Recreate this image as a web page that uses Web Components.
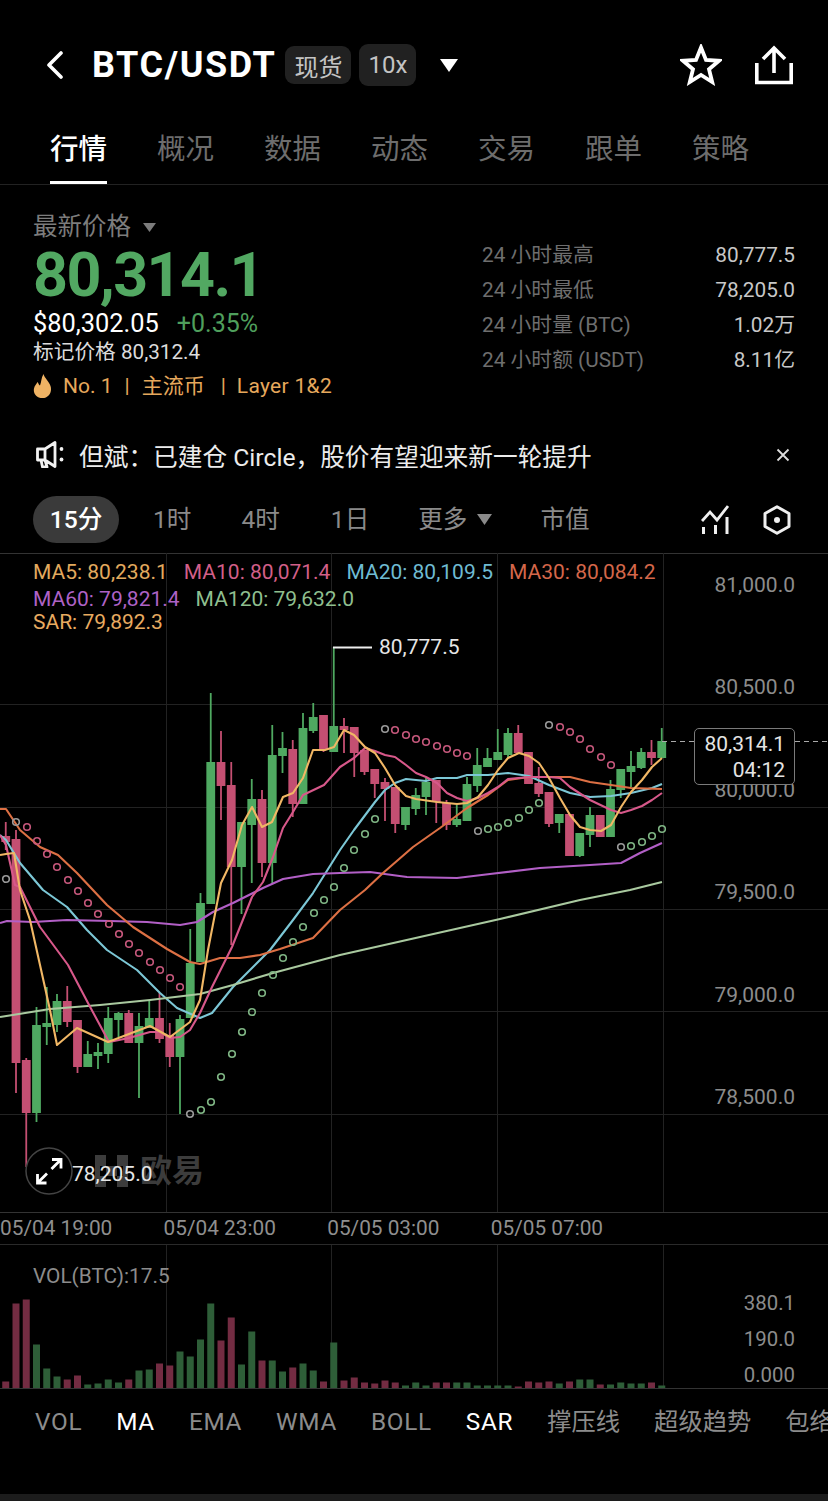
<!DOCTYPE html>
<html lang="zh-CN">
<head>
<meta charset="utf-8">
<title>BTC/USDT</title>
<style>
  html, body { margin: 0; background: #000; height: 1501px; overflow: hidden; }
  body { font-family: Roboto, "Noto Sans CJK SC", sans-serif; color: #fff; }
</style>
</head>
<body>
<pair-header></pair-header>
<market-tabs></market-tabs>
<price-panel></price-panel>
<notice-bar>但斌：已建仓 Circle，股价有望迎来新一轮提升</notice-bar>
<time-bar></time-bar>
<kline-chart></kline-chart>
<time-axis></time-axis>
<volume-chart></volume-chart>
<indicator-bar></indicator-bar>

<script>
const GREEN = '#4fa961';
const RED = '#c44f72';
const GRID = '#222';
const slotX = (i) => 5.75 + 10.25 * i;

// [bodyTop, bodyBottom, wickTop, wickBottom, g|r], index is the slot on the x axis
const CANDLES = [
  [836,842,822,850,'r'],[839,1063,830,1093,'r'],[1060,1113,1058,1167,'r'],[1025,1113,1007,1122,'g'],
  [1023,1027,987,1045,'g'],[1001,1025,994,1032,'g'],[1001,1022,986,1027,'r'],[1020,1067,1020,1073,'r'],
  [1054,1067,1041,1067,'g'],[1052,1056,1043,1069,'g'],[1018,1054,1007,1063,'g'],[1013,1020,1012,1037,'g'],
  [1013,1043,1010,1043,'r'],[1026,1043,1013,1098,'g'],[1018,1028,1000,1028,'g'],[1018,1039,993,1043,'r'],
  [1035,1057,1023,1067,'r'],[1019,1057,1015,1114,'g'],[963,1018,929,1018,'g'],[903,962,893,962,'g'],
  [762,904,693,904,'g'],[762,786,731,820,'r'],[785,867,762,945,'r'],[822,867,822,914,'g'],
  [799,825,779,883,'g'],[799,863,790,877,'r'],[755,863,725,883,'g'],[748,756,732,773,'g'],
  [749,804,740,817,'r'],[728,804,713,804,'g'],[717,731,703,733,'g'],[715,750,715,752,'r'],
  [726,752,647,752,'g'],[726,730,718,753,'r'],[727,753,727,777,'r'],[750,772,750,775,'r'],
  [769,784,769,798,'r'],[782,789,778,821,'r'],[787,824,787,833,'r'],[807,825,807,830,'g'],
  [795,809,788,815,'g'],[782,797,778,815,'g'],[780,802,780,823,'r'],[803,825,800,830,'r'],
  [819,825,805,827,'g'],[784,821,777,821,'g'],[765,786,748,792,'g'],[758,767,748,767,'g'],
  [752,760,729,760,'g'],[733,755,728,758,'g'],[733,753,725,753,'r'],[752,784,752,784,'r'],
  [783,794,767,797,'r'],[792,824,792,827,'r'],[814,823,814,833,'g'],[814,856,814,856,'r'],
  [833,856,833,857,'g'],[815,835,807,847,'g'],[815,837,815,837,'r'],[789,837,780,837,'g'],
  [769,790,769,798,'g'],[766,772,751,787,'g'],[752,768,748,769,'g'],[752,758,740,765,'r'],
  [741,758,728,758,'g']
];

const LINES = {
  '#7cc7d6': [[0,835],[6,840],[20,863],[43,890],[67,907],[87,930],[107,950],[137,970],[160,993],[177,1008],[200,1018],[212,1013],[233,987],[253,967],[270,950],[293,920],[313,893],[340,850],[354,830],[375,802],[385,790],[395,783],[406,779],[426,781],[437,778],[457,778],[467,775],[488,775],[508,773],[529,776],[549,785],[570,793],[590,797],[611,796],[631,793],[652,788],[662,784]],
  '#a9c99f': [[0,1017],[50,1009],[100,1005],[150,1000],[200,994],[233,985],[273,973],[340,955],[500,919],[580,900],[630,890],[662,882]],
  '#b25fc6': [[0,923],[7,921],[33,922],[67,920],[110,921],[147,922],[180,925],[197,922],[213,912],[233,903],[263,888],[283,879],[313,874],[340,873],[370,872],[407,877],[457,878],[490,874],[540,868],[590,865],[621,863],[640,853],[662,843]],
  '#dd7044': [[0,809],[6,809],[20,830],[40,847],[58,855],[77,873],[107,905],[133,927],[167,949],[190,962],[200,964],[220,958],[240,958],[260,955],[280,949],[313,938],[340,910],[365,890],[383,873],[413,847],[440,828],[467,808],[488,795],[508,780],[529,777],[549,777],[570,777],[590,782],[611,785],[631,788],[662,789]],
  '#d7588a': [[0,835],[6,845],[15,885],[20,887],[40,927],[57,950],[68,965],[88,1003],[109,1042],[129,1038],[150,1032],[160,1032],[170,1038],[180,1037],[190,1030],[200,1013],[212,987],[232,947],[252,897],[263,882],[273,857],[283,828],[293,812],[303,795],[324,785],[340,767],[354,758],[365,748],[375,751],[385,755],[395,757],[406,765],[416,773],[426,777],[437,783],[447,793],[457,798],[467,801],[478,798],[488,793],[498,787],[508,779],[529,777],[549,777],[560,778],[570,787],[590,800],[611,810],[621,813],[631,810],[642,806],[652,800],[662,793]],
  '#f1b765': [[0,855],[6,854],[14,853],[20,890],[30,920],[50,1010],[57,1045],[77,1028],[108,1042],[150,1026],[170,1037],[190,1022],[200,1000],[208,950],[221,883],[232,860],[242,825],[252,807],[262,827],[272,822],[283,797],[293,793],[303,778],[313,750],[325,750],[334,747],[344,730],[354,735],[365,747],[375,753],[385,768],[395,785],[406,796],[416,799],[437,802],[457,804],[467,803],[478,797],[488,785],[498,770],[508,758],[519,753],[529,756],[539,763],[549,778],[560,798],[570,815],[580,827],[590,830],[601,831],[611,825],[621,807],[631,792],[642,780],[652,767],[662,758]]
};

// runs of SAR dots: colour, then [x, y], the first dot of a run is grey
const SAR = [
  ['#7fb584', [[6,879]]],
  ['#c6587c', [[16,822],[27,827],[37,841],[47,854],[57,867],[68,880],[78,891],[88,903],[98,914],[109,924],[119,934],[129,944],[139,953],[150,962],[160,970],[170,978],[180,987]]],
  ['#7fb584', [[190,1114],[201,1110],[211,1102],[221,1077],[232,1054],[242,1032],[252,1012],[262,993],[273,975],[283,958],[293,942],[303,927],[314,913],[324,900],[334,887],[344,868],[354,850],[365,834],[375,819]]],
  ['#c6587c', [[385,729],[395,730],[406,735],[416,739],[426,742],[437,746],[447,749],[457,753],[467,756]]],
  ['#7fb584', [[478,831],[488,829],[498,827],[508,823],[519,818],[529,810],[539,803]]],
  ['#c6587c', [[549,725],[560,727],[570,732],[580,739],[590,749],[601,757],[611,765]]],
  ['#7fb584', [[621,847],[631,846],[642,842],[652,836],[662,829]]]
];

// bar heights in px and their side
const VOLUME = [
  [7,'r'],[85,'r'],[89,'r'],[44,'g'],[20,'g'],[12,'g'],[9,'r'],[13,'r'],[4,'g'],[5,'g'],[9,'g'],[6,'g'],[9,'r'],
  [18,'g'],[19,'g'],[25,'r'],[23,'r'],[37,'g'],[32,'g'],[49,'g'],[85,'g'],[48,'r'],[71,'r'],[24,'g'],[57,'g'],
  [28,'r'],[28,'g'],[17,'g'],[21,'r'],[25,'g'],[18,'g'],[7,'r'],[46,'g'],[8,'r'],[11,'r'],[6,'r'],[5,'r'],[8,'r'],
  [6,'r'],[3,'g'],[6,'g'],[3,'g'],[6,'r'],[6,'r'],[6,'g'],[6,'g'],[3,'g'],[3,'g'],[3,'g'],[3,'g'],[2,'r'],[7,'r'],
  [6,'r'],[7,'r'],[5,'g'],[7,'r'],[9,'g'],[9,'g'],[4,'r'],[4,'g'],[6,'g'],[5,'g'],[5,'g'],[6,'r'],[3,'g']
];

class PairHeader extends HTMLElement {
  constructor() {
    super();
    this.attachShadow({ mode: 'open' });
  }

  connectedCallback() {
    this.shadowRoot.innerHTML = `
      <style>
        :host { display: flex; align-items: center; height: 118px; padding: 12px 35px 0 46px; box-sizing: border-box; }
        .back { width: 18px; height: 28px; margin-right: 28px; flex: none; }
        .pair { font-size: 36px; font-weight: 700; letter-spacing: 1.6px; margin-right: 9px; line-height: 44px; }
        .tag { background: #212121; border-radius: 9px; color: #c4c4c4; font-size: 24px; display: flex; align-items: center; justify-content: center; }
        .spot { width: 66px; height: 38px; margin-right: 8px; }
        .lev { width: 57px; height: 42px; }
        .tri { width: 18px; height: 13px; margin-left: 24px; }
        .spacer { flex: 1; }
        .star { width: 42px; height: 42px; margin-right: 33px; }
        .share { width: 38px; height: 40px; }
      </style>
      <svg class="back" viewBox="0 0 18 28"><path d="M15 2 L3 14 L15 26" fill="none" stroke="#fff" stroke-width="3.6" stroke-linecap="round" stroke-linejoin="round"/></svg>
      <div class="pair">BTC/USDT</div>
      <div class="tag spot">现货</div>
      <div class="tag lev">10x</div>
      <svg class="tri" viewBox="0 0 18 13"><path d="M0 0 H18 L9 13 Z" fill="#fff"/></svg>
      <div class="spacer"></div>
      <svg class="star" viewBox="0 0 42 42"><path d="M21 3.5 L26 16 L39 16.8 L29 25.3 L32.2 38 L21 31 L9.8 38 L13 25.3 L3 16.8 L16 16 Z" fill="none" stroke="#fff" stroke-width="3.8" stroke-linejoin="miter"/></svg>
      <svg class="share" viewBox="0 0 38 40"><path d="M1.8 18 V37.5 H36.2 V18 M19 28 V3 M8 14 L19 3 L30 14" fill="none" stroke="#fff" stroke-width="3.6"/></svg>
    `;
  }
}

class MarketTabs extends HTMLElement {
  constructor() {
    super();
    this.attachShadow({ mode: 'open' });
  }

  connectedCallback() {
    const tabs = ['行情', '概况', '数据', '动态', '交易', '跟单', '策略'];
    this.shadowRoot.innerHTML = `
      <style>
        :host { display: flex; gap: 50px; height: 67px; padding-left: 50px; box-sizing: border-box; border-bottom: 1px solid #222; font-size: 28.5px; color: #6d6d6d; }
        .tab { width: 57px; height: 66px; box-sizing: border-box; padding-top: 11px; line-height: 42px; white-space: nowrap; }
        .on { color: #fff; font-weight: 500; border-bottom: 3px solid #fff; }
      </style>
      ${tabs.map((t, i) => `<div class="tab ${i === 0 ? 'on' : ''}">${t}</div>`).join('')}
    `;
  }
}

class PricePanel extends HTMLElement {
  constructor() {
    super();
    this.attachShadow({ mode: 'open' });
  }

  connectedCallback() {
    const stats = [
      ['24 小时最高', '80,777.5'],
      ['24 小时最低', '78,205.0'],
      ['24 小时量 (BTC)', '1.02万'],
      ['24 小时额 (USDT)', '8.11亿']
    ];
    this.shadowRoot.innerHTML = `
      <style>
        :host { display: flex; justify-content: space-between; height: 252px; padding: 27px 33px 0 33px; box-sizing: border-box; }
        .label { display: flex; align-items: center; font-size: 24.5px; line-height: 30px; color: #7c7c7c; }
        .label svg { width: 13px; height: 9px; margin-left: 12px; }
        .last { font-size: 61px; font-weight: 700; line-height: 66px; color: #52a862; letter-spacing: -1.6px; }
        .row { display: flex; align-items: baseline; gap: 18px; line-height: 32px; margin-top: -1px; font-size: 25.4px; }
        .chg { color: #4f9f5c; font-size: 25px; }
        .mark { font-size: 20.7px; line-height: 26px; color: #dcdcdc; margin-top: -1px; }
        .hot { display: flex; align-items: center; font-size: 21px; line-height: 28px; color: #e6a85c; margin-top: 7px; }
        .hot svg { width: 19px; height: 24px; margin-right: 11px; }
        .sep { margin: 0 12px; }
        .stats { width: 313px; padding-top: 28px; display: grid; grid-template-columns: 1fr auto; grid-auto-rows: 35px; align-items: baseline; font-size: 20.8px; line-height: 30px; }
        .stats .k { color: #6e6e6e; }
        .stats .v { color: #c8c8c8; text-align: right; }
      </style>
      <div>
        <div class="label">最新价格<svg viewBox="0 0 13 9"><path d="M0 0 H13 L6.5 9 Z" fill="#7c7c7c"/></svg></div>
        <div class="last">80,314.1</div>
        <div class="row"><span>$80,302.05</span><span class="chg">+0.35%</span></div>
        <div class="mark">标记价格 80,312.4</div>
        <div class="hot">
          <svg viewBox="0 0 19 24"><path d="M10.5 0 C11.5 4 16 7.5 17.5 12 C19.5 18 15.5 24 9.5 24 C3.5 24 0 19.5 1 14.5 C1.6 11.5 3.5 10 4.5 8 C5.5 9.5 6 11 7 11.5 C8.5 8 8 4 10.5 0 Z" fill="#efb364"/></svg>
          <span>No. 1</span><span class="sep">|</span><span>主流币</span><span class="sep" style="margin:0 11px 0 16px">|</span><span style="letter-spacing:.3px">Layer 1&amp;2</span>
        </div>
      </div>
      <div class="stats">
        ${stats.map(([k, v]) => `<div class="k">${k}</div><div class="v">${v}</div>`).join('')}
      </div>
    `;
  }
}

class NoticeBar extends HTMLElement {
  constructor() {
    super();
    this.attachShadow({ mode: 'open' });
  }

  connectedCallback() {
    this.shadowRoot.innerHTML = `
      <style>
        :host { display: flex; align-items: center; height: 41px; padding: 0 38px 6px 36px; box-sizing: border-box; font-size: 24.7px; color: #ececec; }
        .horn { width: 28px; height: 27px; margin-right: 15px; flex: none; }
        .text { flex: 1; white-space: nowrap; }
        .close { width: 14px; height: 14px; }
      </style>
      <svg class="horn" viewBox="0 0 28 27">
        <path d="M1.5 8 H9 L19 1.5 V25.5 L9 19 H1.5 Z M9 19 L11 26 H6.5 L5 19 M9 8 V19" fill="none" stroke="#f2f2f2" stroke-width="2.8" stroke-linejoin="round"/>
        <circle cx="25.5" cy="8" r="1.9" fill="#f2f2f2"/><circle cx="25.5" cy="18.5" r="1.9" fill="#f2f2f2"/>
      </svg>
      <span class="text"><slot></slot></span>
      <svg class="close" viewBox="0 0 14 14"><path d="M1.5 1.5 L12.5 12.5 M12.5 1.5 L1.5 12.5" stroke="#ddd" stroke-width="1.8"/></svg>
    `;
  }
}

class TimeBar extends HTMLElement {
  constructor() {
    super();
    this.attachShadow({ mode: 'open' });
  }

  connectedCallback() {
    this.shadowRoot.innerHTML = `
      <style>
        :host { display: flex; align-items: center; height: 75px; padding: 8px 37px 0 33px; box-sizing: border-box; font-size: 24.6px; color: #8a8a8a; }
        .pill { width: 86px; height: 47px; box-sizing: border-box; padding-bottom: 5px; border-radius: 24px; background: #3a3a3a; color: #fff; display: flex; align-items: center; justify-content: center; font-weight: 500; margin-right: 34px; }
        .t { margin-bottom: 6px; }
        .more { display: flex; align-items: center; }
        .more svg { width: 15px; height: 11px; margin: 6px 0 0 10px; }
        .spacer { flex: 1; }
        svg.kind { width: 28px; height: 30px; margin-right: 34px; }
        svg.hex { width: 28px; height: 30px; }
      </style>
      <div class="pill">15分</div>
      <div class="t" style="margin-right:50px">1时</div>
      <div class="t" style="margin-right:51px">4时</div>
      <div class="t" style="margin-right:49px">1日</div>
      <div class="t more" style="margin-right:48px">更多<svg viewBox="0 0 15 11"><path d="M0 0 H15 L7.5 11 Z" fill="#8a8a8a"/></svg></div>
      <div class="t">市值</div>
      <div class="spacer"></div>
      <svg class="kind" viewBox="0 0 28 30"><path d="M1 16 L9 7 L16 15 L27 1" fill="none" stroke="#f0f0f0" stroke-width="2.8"/><path d="M2.5 29 V22 M14.5 29 V20 M26 29 V12" stroke="#f0f0f0" stroke-width="3"/></svg>
      <svg class="hex" viewBox="0 0 28 30"><path d="M14 1.8 L26 8.5 V21.5 L14 28.2 L2 21.5 V8.5 Z" fill="none" stroke="#f0f0f0" stroke-width="3" stroke-linejoin="round"/><circle cx="14" cy="15" r="3" fill="#f0f0f0"/></svg>
    `;
  }
}

class KlineChart extends HTMLElement {
  constructor() {
    super();
    this.attachShadow({ mode: 'open' });
  }

  _grid() {
    const rows = [553, 704, 807, 909, 1011, 1114, 1212];
    const cols = [166, 331, 497, 663];
    return rows.map((y) => `<path d="M0 ${y + 0.5} H828" stroke="${y === 553 || y === 1212 ? '#333' : GRID}"/>`).join('') +
      cols.map((x) => `<path d="M${x + 0.5} 553 V1212" stroke="${GRID}"/>`).join('');
  }

  _candles() {
    return CANDLES.map(([top, bot, wTop, wBot, side], i) => {
      const x = slotX(i);
      const col = side === 'g' ? GREEN : RED;
      return `<path d="M${x} ${wTop} V${wBot}" stroke="${col}" stroke-width="1.8"/>` +
        `<rect x="${x - 4.4}" y="${top}" width="8.8" height="${bot - top}" fill="${col}"/>`;
    }).join('');
  }

  _lines() {
    return Object.entries(LINES).map(([col, pts]) =>
      `<polyline points="${pts.map((p) => p.join(',')).join(' ')}" fill="none" stroke="${col}" stroke-width="2.1" stroke-linejoin="round"/>`
    ).join('');
  }

  _sar() {
    return SAR.map(([col, pts]) => pts.map(([x, y], i) =>
      `<circle cx="${x}" cy="${y}" r="3.3" fill="none" stroke="${i === 0 ? '#9a9a9a' : col}" stroke-width="1.6"/>`
    ).join('')).join('');
  }

  connectedCallback() {
    const axis = [['81,000.0', 585], ['80,500.0', 687], ['80,000.0', 790], ['79,500.0', 892], ['79,000.0', 995], ['78,500.0', 1097]];
    this.shadowRoot.innerHTML = `
      <style>
        :host { display: block; position: relative; height: 660px; font-size: 21px; overflow: hidden; }
        svg.plot { display: block; width: 828px; height: 660px; }
        .legend { position: absolute; left: 33px; top: 6px; width: 650px; line-height: 27px; }
        .legend .line { display: flex; gap: 16px; white-space: nowrap; height: 27px; }
        .legend .sar { margin-top: -4px; }
        .price { position: absolute; right: 33px; color: #8c8c8c; line-height: 24px; transform: translateY(-12px); }
        .tag { position: absolute; left: 694px; top: 175px; width: 101px; height: 57px; box-sizing: border-box; border: 1px solid #7a7a7a; border-radius: 5px; background: #000; color: #e4e4e4; text-align: right; padding: 2px 9px 0 0; line-height: 26px; }
        .mark { position: absolute; color: #e6e6e6; line-height: 24px; transform: translateY(-12px); }
        .expand { position: absolute; left: 25px; top: 594px; width: 48px; height: 48px; }
        .wm { position: absolute; left: 95px; top: 602px; height: 32px; display: flex; align-items: center; gap: 12px; color: #3c3c3c; font-size: 32px; font-weight: 700; line-height: 32px; }
        .wm svg { width: 33px; height: 32px; }
      </style>
      <svg class="plot" viewBox="0 553 828 660">
        ${this._grid()}
        ${this._candles()}
        ${this._lines()}
        ${this._sar()}
        <path d="M662 741.5 H694 M795 741.5 H828" stroke="#aaa" stroke-width="1.2" stroke-dasharray="5 4"/>
        <path d="M333 647.5 H372" stroke="#eee" stroke-width="2"/>
      </svg>
      <div class="wm">
        <svg viewBox="0 0 33 32"><path d="M0 0 H11 V11 H0 Z M22 0 H33 V11 H22 Z M11 11 H22 V21 H11 Z M0 21 H11 V32 H0 Z M22 21 H33 V32 H22 Z M0 11 H5 V21 H0 Z M28 11 H33 V21 H28 Z" fill="#3c3c3c"/></svg>
        <span>欧易</span>
      </div>
      <div class="legend">
        <div class="line">
          <span style="color:#e3aa5e">MA5: 80,238.1</span>
          <span style="color:#d25f88">MA10: 80,071.4</span>
          <span style="color:#6fbbd2">MA20: 80,109.5</span>
          <span style="color:#d4674a">MA30: 80,084.2</span>
        </div>
        <div class="line">
          <span style="color:#ae62c6">MA60: 79,821.4</span>
          <span style="color:#8fbf8f">MA120: 79,632.0</span>
        </div>
        <div class="line sar"><span style="color:#e8ab60">SAR: 79,892.3</span></div>
      </div>
      ${axis.map(([t, y]) => `<div class="price" style="top:${y - 553}px">${t}</div>`).join('')}
      <div class="tag">80,314.1<br>04:12</div>
      <div class="mark" style="left:379px;top:94px">80,777.5</div>
      <div class="mark" style="left:72px;top:621px">78,205.0</div>
      <svg class="expand" viewBox="0 0 48 48">
        <circle cx="24" cy="24" r="23" fill="rgba(0,0,0,0.55)" stroke="#444" stroke-width="1.5"/>
        <path d="M12.5 36 L22 26.5 M36 12.5 L26.5 22 M12.5 27 V36 H21.5 M27 12.5 H36 V21.5" fill="none" stroke="#fff" stroke-width="2.8"/>
      </svg>
    `;
  }
}

class TimeAxis extends HTMLElement {
  constructor() {
    super();
    this.attachShadow({ mode: 'open' });
  }

  connectedCallback() {
    const ticks = ['05/04 19:00', '05/04 23:00', '05/05 03:00', '05/05 07:00'];
    this.shadowRoot.innerHTML = `
      <style>
        :host { display: flex; height: 32px; box-sizing: border-box; border-bottom: 1px solid #2a2a2a; font-size: 20.8px; color: #8f8f8f; line-height: 30px; }
        div { width: 163.6px; flex: none; white-space: nowrap; }
      </style>
      ${ticks.map((t) => `<div>${t}</div>`).join('')}
    `;
  }
}

class VolumeChart extends HTMLElement {
  constructor() {
    super();
    this.attachShadow({ mode: 'open' });
  }

  connectedCallback() {
    const bars = VOLUME.map(([h, side], i) =>
      `<rect x="${slotX(i) - 3.5}" y="${1387.5 - h}" width="7" height="${h}" fill="${side === 'g' ? '#2e5e38' : '#732c42'}"/>`
    ).join('');
    const cols = [166, 331, 497, 663].map((x) => `<path d="M${x + 0.5} 1244 V1387" stroke="${GRID}"/>`).join('');
    this.shadowRoot.innerHTML = `
      <style>
        :host { display: block; position: relative; height: 144px; font-size: 20.8px; color: #8c8c8c; }
        svg { display: block; width: 828px; height: 144px; }
        .title { position: absolute; left: 33px; top: 18px; line-height: 26px; }
        .y { position: absolute; right: 33px; line-height: 24px; font-size: 20.4px; transform: translateY(-12px); }
      </style>
      <svg viewBox="0 1244 828 144">${cols}${bars}<path d="M0 1387.5 H828" stroke="#333"/></svg>
      <div class="title">VOL(BTC):17.5</div>
      <div class="y" style="top:58px">380.1</div>
      <div class="y" style="top:94px">190.0</div>
      <div class="y" style="top:130px">0.000</div>
    `;
  }
}

class IndicatorBar extends HTMLElement {
  constructor() {
    super();
    this.attachShadow({ mode: 'open' });
  }

  connectedCallback() {
    const items = ['VOL', 'MA', 'EMA', 'WMA', 'BOLL', 'SAR', '撑压线', '超级趋势', '包络线'];
    const active = ['MA', 'SAR'];
    this.shadowRoot.innerHTML = `
      <style>
        :host { display: block; height: 113px; overflow: hidden; position: relative; box-sizing: border-box; background: #000; font-size: 24.3px; color: #8c8c8c; }
        .row { display: flex; gap: 34px; padding: 15px 0 0 35px; line-height: 36px; white-space: nowrap; }
        .lat { letter-spacing: 0.7px; }
        .on { color: #fff; }
        .foot { position: absolute; left: 0; right: 0; bottom: 0; height: 8px; background: #1c1c1c; }
      </style>
      <div class="row">${items.map((t) => `<span class="${/^[A-Z]+$/.test(t) ? 'lat' : ''} ${active.includes(t) ? 'on' : ''}">${t}</span>`).join('')}</div>
      <div class="foot"></div>
    `;
  }
}

customElements.define('pair-header', PairHeader);
customElements.define('market-tabs', MarketTabs);
customElements.define('price-panel', PricePanel);
customElements.define('notice-bar', NoticeBar);
customElements.define('time-bar', TimeBar);
customElements.define('kline-chart', KlineChart);
customElements.define('time-axis', TimeAxis);
customElements.define('volume-chart', VolumeChart);
customElements.define('indicator-bar', IndicatorBar);
</script>
</body>
</html>
